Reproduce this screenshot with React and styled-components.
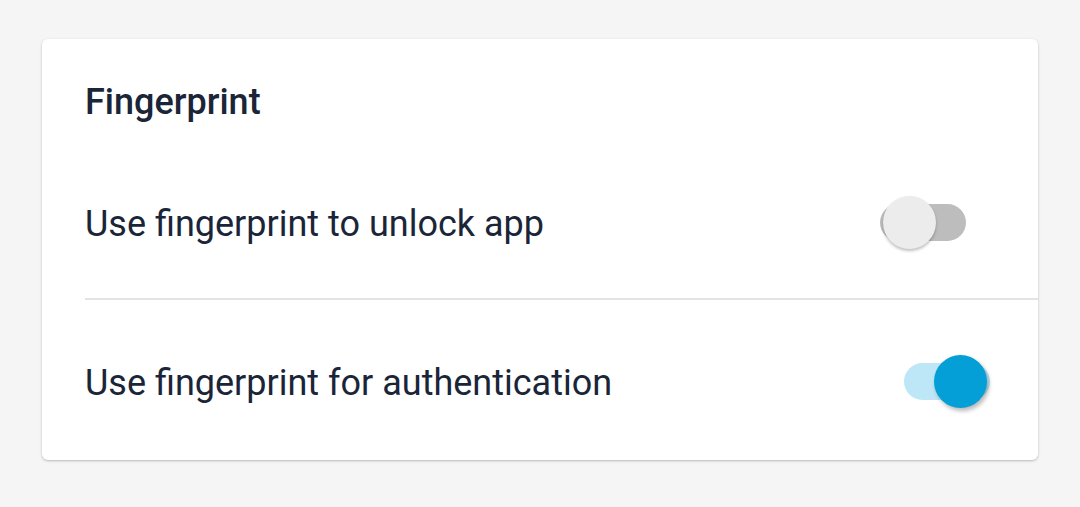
import React, {useState} from 'react'
import styled, {createGlobalStyle} from 'styled-components';

const GlobalStyle = createGlobalStyle`
  body {
    margin: 0;
    background: #f5f5f5;
    font-family: Roboto, "Noto Sans", sans-serif;
  }
`;

const Page = styled.div`
  padding: 39px 42px 47px 42px;
`;

const Card = styled.div`
  background: #ffffff;
  border-radius: 6px;
  box-shadow: 0 1px 3px rgba(0, 0, 0, 0.2), 0 1px 1px rgba(0, 0, 0, 0.06);
  padding: 43px 0 0 43px;
  height: 421px;
  box-sizing: border-box;
`;

const Title = styled.h2`
  margin: 0;
  font-size: 36px;
  line-height: 40px;
  font-weight: 500;
  color: #1b2538;
`;

const Row = styled.div`
  display: flex;
  align-items: center;
  justify-content: space-between;
  height: 120px;
  padding-right: 48px;
  margin-top: ${props => props.top || 0}px;
`;

const Label = styled.span`
  padding-top: 4px;
  font-size: 36px;
  color: #1b2538;
`;

const Divider = styled.div`
  height: 2px;
  background: #e3e3e3;
  margin: 16px 0 0 0;
`;

const Switch = styled.button`
  position: relative;
  width: 110px;
  height: 53px;
  padding: 0;
  border: none;
  background: transparent;
  cursor: pointer;
`;

const Track = styled.span`
  position: absolute;
  top: 8px;
  left: ${props => props.on ? 24 : 0}px;
  width: 86px;
  height: 37px;
  border-radius: 19px;
  background: ${props => props.on ? '#bde6f6' : '#bdbdbd'};
`;

const Thumb = styled.span`
  position: absolute;
  top: 0;
  left: ${props => props.on ? 54 : 3}px;
  width: 53px;
  height: 53px;
  border-radius: 50%;
  background: ${props => props.on ? '#049fd7' : '#ececec'};
  box-shadow: ${props => props.on
    ? '2px 3px 4px rgba(0, 0, 0, 0.28)'
    : '0 2px 3px rgba(0, 0, 0, 0.25)'};
`;

const Toggle = ({on, onClick}) => (
  <Switch onClick={onClick}>
    <Track on={on ? 1 : 0}/>
    <Thumb on={on ? 1 : 0}/>
  </Switch>
)

const App = () => {
  const [unlock, setUnlock] = useState(false)
  const [auth, setAuth] = useState(true)
  return (
    <Page>
      <GlobalStyle/>
      <Card>
        <Title>Fingerprint</Title>
        <Row top={40}>
          <Label>Use fingerprint to unlock app</Label>
          <Toggle on={unlock} onClick={() => setUnlock(!unlock)}/>
        </Row>
        <Divider/>
        <Row top={21}>
          <Label>Use fingerprint for authentication</Label>
          <Toggle on={auth} onClick={() => setAuth(!auth)}/>
        </Row>
      </Card>
    </Page>
  )
}

export default App;
